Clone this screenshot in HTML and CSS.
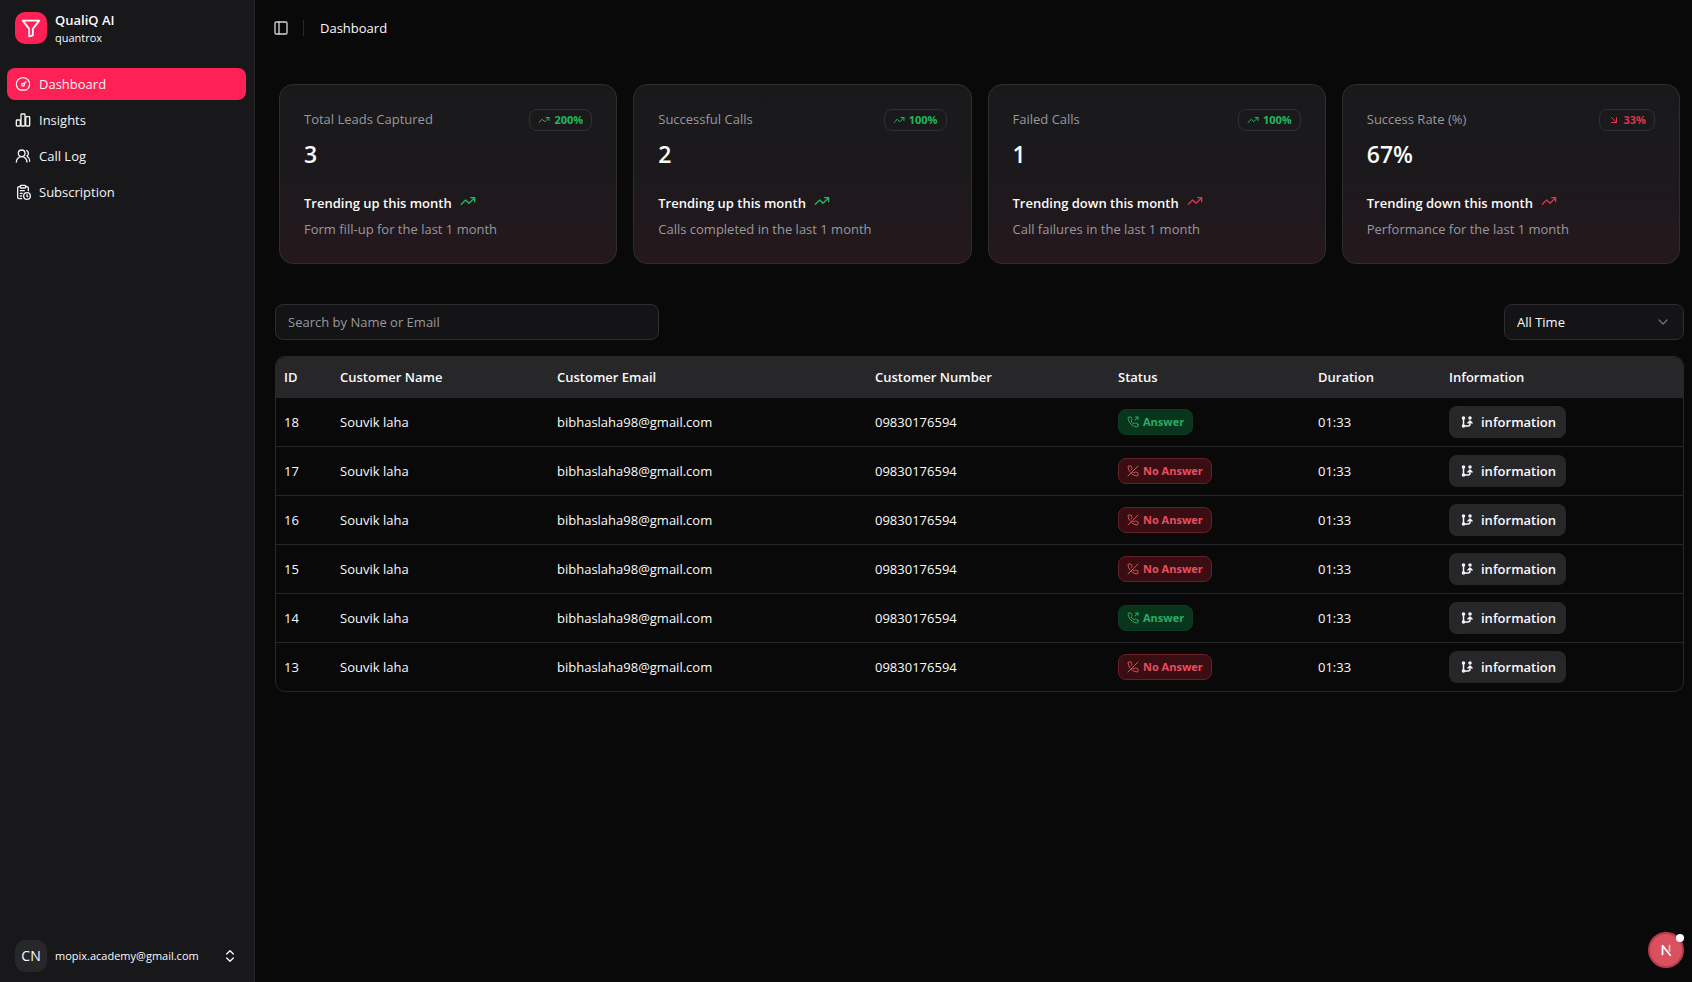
FILE: index.html
```
<!DOCTYPE html>
<html lang="en">
<head>
  <meta charset="UTF-8">
  <meta name="viewport" content="width=device-width, initial-scale=1.0">
  <title>QualiQ AI - Dashboard</title>
  <link rel="stylesheet" href="styles.css">
</head>
<body>
  <!-- shared icons -->
  <svg class="sprite" aria-hidden="true">
    <symbol id="trend-up" viewBox="0 0 24 24"><path d="M2 17 8.500 10.500 13.500 15.500 22 7M16 7h6v6"/></symbol>
    <symbol id="arrow-down-right" viewBox="0 0 24 24"><path d="m7 7 10 10M17 7v10H7"/></symbol>
    <symbol id="phone-out" viewBox="0 0 24 24"><path d="m16 8 6-6M17 2h5v5M22 16.920v3a2 2 0 0 1-2.180 2 19.790 19.790 0 0 1-8.630-3.070 19.500 19.500 0 0 1-6-6 19.790 19.790 0 0 1-3.070-8.670A2 2 0 0 1 4.110 2h3a2 2 0 0 1 2 1.720 12.840 12.840 0 0 0 .7 2.810 2 2 0 0 1-.45 2.110L8.090 9.910a16 16 0 0 0 6 6l1.270-1.270a2 2 0 0 1 2.110-.45 12.840 12.840 0 0 0 2.810.7A2 2 0 0 1 22 16.920z"/></symbol>
    <symbol id="phone-off" viewBox="0 0 24 24"><path d="M10.680 13.310a16 16 0 0 0 3.410 2.600l1.270-1.270a2 2 0 0 1 2.110-.45 12.840 12.840 0 0 0 2.810.7 2 2 0 0 1 1.720 2v3a2 2 0 0 1-2.180 2 19.790 19.790 0 0 1-8.630-3.070 19.420 19.420 0 0 1-3.330-2.670M5.190 12.810a19.790 19.790 0 0 1-3.070-8.630A2 2 0 0 1 4.110 2h3a2 2 0 0 1 2 1.720 12.840 12.840 0 0 0 .7 2.810 2 2 0 0 1-.45 2.110L8.090 9.910M22 2 2 22"/></symbol>
    <symbol id="branches" viewBox="0 0 24 24"><circle cx="5" cy="4" r="2"/><circle cx="18" cy="4" r="2"/><circle cx="5" cy="20" r="2"/><path d="M5 6v12M7 20h7a4 4 0 0 0 4-4v-5M14 14l4-4 4 4"/></symbol>
  </svg>

  <div class="app">
    <aside class="sidebar">
      <div class="brand">
        <div class="brand-logo">
          <svg class="icon" viewBox="0 0 24 24"><path d="M3 4h18l-7 9v7l-4 1v-8z"/></svg>
        </div>
        <div class="brand-text">
          <strong>QualiQ AI</strong>
          <span>quantrox</span>
        </div>
      </div>

      <nav class="menu">
        <a href="#" class="active">
          <svg class="icon" viewBox="0 0 24 24"><path d="M7 21a10 10 0 1 1 10 0z"/><circle cx="12" cy="13" r="2"/><path d="m13.500 11.500 3-3"/></svg>
          Dashboard
        </a>
        <a href="#">
          <svg class="icon" viewBox="0 0 24 24"><rect x="2" y="12" width="6" height="9" rx="1"/><rect x="9" y="3" width="6" height="18" rx="1"/><rect x="16" y="7" width="6" height="14" rx="1"/></svg>
          Insights
        </a>
        <a href="#">
          <svg class="icon" viewBox="0 0 24 24"><circle cx="10" cy="8" r="5"/><path d="M2 21a8 8 0 0 1 16 0M22 20c0-3.370-2-6.500-4-8a5 5 0 0 0-.45-8.300"/></svg>
          Call Log
        </a>
        <a href="#">
          <svg class="icon" viewBox="0 0 24 24"><rect x="8" y="2" width="8" height="4" rx="1"/><path d="M16 4h2a2 2 0 0 1 2 2v4M8 4H6a2 2 0 0 0-2 2v14a2 2 0 0 0 2 2h4M8 10h6M8 14h3M8 18h2"/><circle cx="18" cy="18" r="5"/><path d="M18 16v2l1 1"/></svg>
          Subscription
        </a>
      </nav>

      <button class="user">
        <span class="avatar">CN</span>
        <span class="user-email">mopix.academy@gmail.com</span>
        <svg class="icon" viewBox="0 0 24 24"><path d="m7 15 5 5 5-5M7 9l5-5 5 5"/></svg>
      </button>
    </aside>

    <main>
      <header class="topbar">
        <button class="toggle" aria-label="Toggle sidebar">
          <svg class="icon" viewBox="0 0 24 24"><rect x="3" y="3" width="18" height="18" rx="2"/><path d="M9 3v18"/></svg>
        </button>
        <h1>Dashboard</h1>
      </header>

      <section class="cards">
        <article class="card">
          <div class="card-head">
            <h2>Total Leads Captured</h2>
            <span class="badge up"><svg class="icon"><use href="#trend-up"/></svg>200%</span>
          </div>
          <p class="value">3</p>
          <p class="trend">Trending up this month <svg class="icon up"><use href="#trend-up"/></svg></p>
          <p class="note">Form fill-up for the last 1 month</p>
        </article>
        <article class="card">
          <div class="card-head">
            <h2>Successful Calls</h2>
            <span class="badge up"><svg class="icon"><use href="#trend-up"/></svg>100%</span>
          </div>
          <p class="value">2</p>
          <p class="trend">Trending up this month <svg class="icon up"><use href="#trend-up"/></svg></p>
          <p class="note">Calls completed in the last 1 month</p>
        </article>
        <article class="card">
          <div class="card-head">
            <h2>Failed Calls</h2>
            <span class="badge up"><svg class="icon"><use href="#trend-up"/></svg>100%</span>
          </div>
          <p class="value">1</p>
          <p class="trend">Trending down this month <svg class="icon down"><use href="#trend-up"/></svg></p>
          <p class="note">Call failures in the last 1 month</p>
        </article>
        <article class="card">
          <div class="card-head">
            <h2>Success Rate (%)</h2>
            <span class="badge down"><svg class="icon"><use href="#arrow-down-right"/></svg>33%</span>
          </div>
          <p class="value">67%</p>
          <p class="trend">Trending down this month <svg class="icon down"><use href="#trend-up"/></svg></p>
          <p class="note">Performance for the last 1 month</p>
        </article>
      </section>

      <div class="filters">
        <input type="text" placeholder="Search by Name or Email" aria-label="Search by Name or Email">
        <div class="select">
          <select aria-label="Period">
            <option>All Time</option>
            <option>Today</option>
            <option>Last 7 days</option>
            <option>Last 30 days</option>
          </select>
          <svg class="icon" viewBox="0 0 24 24"><path d="m6 9 6 6 6-6"/></svg>
        </div>
      </div>

      <div class="table-wrap">
        <table>
          <thead>
            <tr>
              <th class="col-id">ID</th>
              <th class="col-name">Customer Name</th>
              <th class="col-email">Customer Email</th>
              <th class="col-number">Customer Number</th>
              <th class="col-status">Status</th>
              <th class="col-duration">Duration</th>
              <th class="col-info">Information</th>
            </tr>
          </thead>
          <tbody>
            <tr>
              <td>18</td><td>Souvik laha</td><td>bibhaslaha98@gmail.com</td><td>09830176594</td>
              <td><span class="status answer"><svg class="icon"><use href="#phone-out"/></svg>Answer</span></td>
              <td>01:33</td>
              <td><button class="info"><svg class="icon"><use href="#branches"/></svg>information</button></td>
            </tr>
            <tr>
              <td>17</td><td>Souvik laha</td><td>bibhaslaha98@gmail.com</td><td>09830176594</td>
              <td><span class="status no-answer"><svg class="icon"><use href="#phone-off"/></svg>No Answer</span></td>
              <td>01:33</td>
              <td><button class="info"><svg class="icon"><use href="#branches"/></svg>information</button></td>
            </tr>
            <tr>
              <td>16</td><td>Souvik laha</td><td>bibhaslaha98@gmail.com</td><td>09830176594</td>
              <td><span class="status no-answer"><svg class="icon"><use href="#phone-off"/></svg>No Answer</span></td>
              <td>01:33</td>
              <td><button class="info"><svg class="icon"><use href="#branches"/></svg>information</button></td>
            </tr>
            <tr>
              <td>15</td><td>Souvik laha</td><td>bibhaslaha98@gmail.com</td><td>09830176594</td>
              <td><span class="status no-answer"><svg class="icon"><use href="#phone-off"/></svg>No Answer</span></td>
              <td>01:33</td>
              <td><button class="info"><svg class="icon"><use href="#branches"/></svg>information</button></td>
            </tr>
            <tr>
              <td>14</td><td>Souvik laha</td><td>bibhaslaha98@gmail.com</td><td>09830176594</td>
              <td><span class="status answer"><svg class="icon"><use href="#phone-out"/></svg>Answer</span></td>
              <td>01:33</td>
              <td><button class="info"><svg class="icon"><use href="#branches"/></svg>information</button></td>
            </tr>
            <tr>
              <td>13</td><td>Souvik laha</td><td>bibhaslaha98@gmail.com</td><td>09830176594</td>
              <td><span class="status no-answer"><svg class="icon"><use href="#phone-off"/></svg>No Answer</span></td>
              <td>01:33</td>
              <td><button class="info"><svg class="icon"><use href="#branches"/></svg>information</button></td>
            </tr>
          </tbody>
        </table>
      </div>
    </main>
  </div>

  <button class="dev-button" aria-label="Open dev tools">
    <svg class="icon" viewBox="0 0 16 16"><path d="M4 13V3l9 11"/><path d="M12 3v6" opacity="0.6"/></svg>
  </button>
</body>
</html>
```

FILE: styles.css
```
* {
  box-sizing: border-box;
}
body {
  margin: 0;
  background-color: #09090a;
  color: #fafafa;
  font-family: "Open Sans", "Noto Sans", sans-serif;
  font-size: 13px;
  line-height: 20px;
}
h1, h2, p {
  margin: 0;
  font-size: 13px;
  font-weight: 400;
}
button, input, select {
  font: inherit;
  color: inherit;
}
button {
  border: none;
  background: none;
  padding: 0;
  cursor: pointer;
}
.sprite {
  position: absolute;
  width: 0;
  height: 0;
}
.icon {
  width: 16px;
  height: 16px;
  flex-shrink: 0;
  fill: none;
  stroke: currentColor;
  stroke-width: 2;
  stroke-linecap: round;
  stroke-linejoin: round;
}
.up {
  color: #22b85c;
}
.down {
  color: #d9364c;
}

.app {
  display: flex;
  min-height: 100vh;
}

/* Sidebar */
.sidebar {
  display: flex;
  flex-direction: column;
  flex-shrink: 0;
  width: 255px;
  padding: 4px 8px 2px 7px;
  background-color: #18181b;
  border-right: 1px solid #242427;
}
.brand {
  display: flex;
  align-items: center;
  gap: 8px;
  height: 48px;
  padding: 0 8px;
}
.brand-logo {
  display: flex;
  align-items: center;
  justify-content: center;
  width: 32px;
  height: 32px;
  border-radius: 10px;
  background-color: #ff2056;
}
.brand-logo .icon {
  width: 22px;
  height: 22px;
}
.brand-text {
  display: flex;
  flex-direction: column;
}
.brand-text strong {
  font-weight: 600;
}
.brand-text span {
  font-size: 11px;
  line-height: 16px;
}
.menu {
  display: flex;
  flex-direction: column;
  gap: 4px;
  margin-top: 16px;
}
.menu a {
  display: flex;
  align-items: center;
  gap: 8px;
  height: 32px;
  padding: 0 8px;
  border-radius: 8px;
  color: #f4f4f5;
  text-decoration: none;
}
.menu a.active {
  background-color: #ff2056;
}
.user {
  display: flex;
  align-items: center;
  gap: 8px;
  height: 48px;
  margin-top: auto;
  padding: 0 8px;
  text-align: left;
}
.avatar {
  width: 32px;
  border-radius: 10px;
  background-color: #27272a;
  font-size: 14px;
  line-height: 32px;
  text-align: center;
}
.user-email {
  flex: 1;
  font-size: 11px;
  font-weight: 500;
}

/* Main area */
main {
  flex: 1;
  min-width: 0;
  padding: 0 8px 24px 20px;
}
.topbar {
  display: flex;
  align-items: center;
  height: 56px;
}
.toggle {
  display: flex;
  align-items: center;
  height: 16px;
  padding: 0 14px 0 0;
  margin-left: -2px;
  border-right: 1px solid #27272a;
  color: #d4d4d8;
}
.topbar h1 {
  margin-left: 16px;
}

.cards {
  display: grid;
  grid-template-columns: repeat(4, 1fr);
  gap: 16px;
  padding: 28px 4px 40px;
}
.card {
  padding: 24px;
  border: 1px solid #2e2e31;
  border-radius: 14px;
  background: linear-gradient(to bottom, #19191b 0%, #1b191c 45%, #25181d 100%);
}
.card-head {
  display: flex;
  align-items: flex-start;
  justify-content: space-between;
  height: 20px;
}
.card h2,
.note {
  color: #98989f;
}
.badge {
  display: flex;
  align-items: center;
  gap: 4px;
  height: 22px;
  padding: 0 8px;
  border: 1px solid #303033;
  border-radius: 8px;
  font-size: 11px;
  font-weight: 700;
}
.badge .icon,
.status .icon,
.info .icon {
  width: 12px;
  height: 12px;
}
.value {
  margin-top: 8px;
  font-size: 23px;
  font-weight: 600;
  line-height: 34px;
}
.trend {
  display: flex;
  gap: 8px;
  margin-top: 22px;
  font-weight: 600;
}
.note {
  margin-top: 6px;
}

/* Search and period */
.filters {
  display: flex;
  justify-content: space-between;
  margin-bottom: 16px;
}
.filters input,
.filters select {
  height: 36px;
  padding: 0 12px;
  border: 1px solid #2e2e31;
  border-radius: 8px;
  background-color: #141416;
  outline: none;
}
.filters input {
  width: 384px;
}
.filters input::placeholder {
  color: #98989f;
  opacity: 1;
}
.select {
  position: relative;
}
.filters select {
  width: 180px;
  appearance: none;
}
.select .icon {
  position: absolute;
  top: 10px;
  right: 13px;
  color: #707077;
  pointer-events: none;
}

/* Call table */
.table-wrap {
  overflow: hidden;
  border: 1px solid #27272a;
  border-radius: 10px;
}
table {
  width: 100%;
  border-collapse: separate;
  border-spacing: 0;
  table-layout: fixed;
}
th {
  height: 41px;
  padding: 0 8px;
  border-bottom: 1px solid #27272a;
  background-color: #27272a;
  font-weight: 600;
  text-align: left;
}
td {
  height: 49px;
  padding: 0 8px;
  border-bottom: 1px solid #27272a;
}
tbody tr:last-child td {
  height: 48px;
  border-bottom: none;
}
.col-id { width: 56px; }
.col-name { width: 217px; }
.col-email { width: 318px; }
.col-number { width: 243px; }
.col-status { width: 200px; }
.col-duration { width: 131px; }
.col-info { width: 242px; }
.status {
  display: flex;
  align-items: center;
  gap: 4px;
  width: fit-content;
  height: 26px;
  padding: 0 8px;
  border: 1px solid;
  border-radius: 8px;
  font-size: 11px;
  font-weight: 700;
}
.answer {
  border-color: #0b3b20;
  background-color: #0a351d;
  color: #27ae60;
}
.no-answer {
  border-color: #66202a;
  background-color: #3a0d13;
  color: #e5505f;
}
.info {
  display: flex;
  align-items: center;
  gap: 8px;
  height: 32px;
  padding: 0 10px 0 12px;
  border-radius: 8px;
  background-color: #27272a;
  font-weight: 600;
}
.info .icon {
  stroke-width: 3;
}

.dev-button {
  position: fixed;
  right: 8px;
  bottom: 14px;
  display: flex;
  align-items: center;
  justify-content: center;
  width: 36px;
  height: 36px;
  border: 2px solid #b93a4c;
  border-radius: 50%;
  background-color: #d9505f;
  color: #fff;
}
.dev-button .icon {
  width: 14px;
  height: 14px;
}
.dev-button::after {
  content: "";
  position: absolute;
  top: 0;
  right: -2px;
  width: 8px;
  height: 8px;
  border-radius: 50%;
  background-color: #fff;
}
```
